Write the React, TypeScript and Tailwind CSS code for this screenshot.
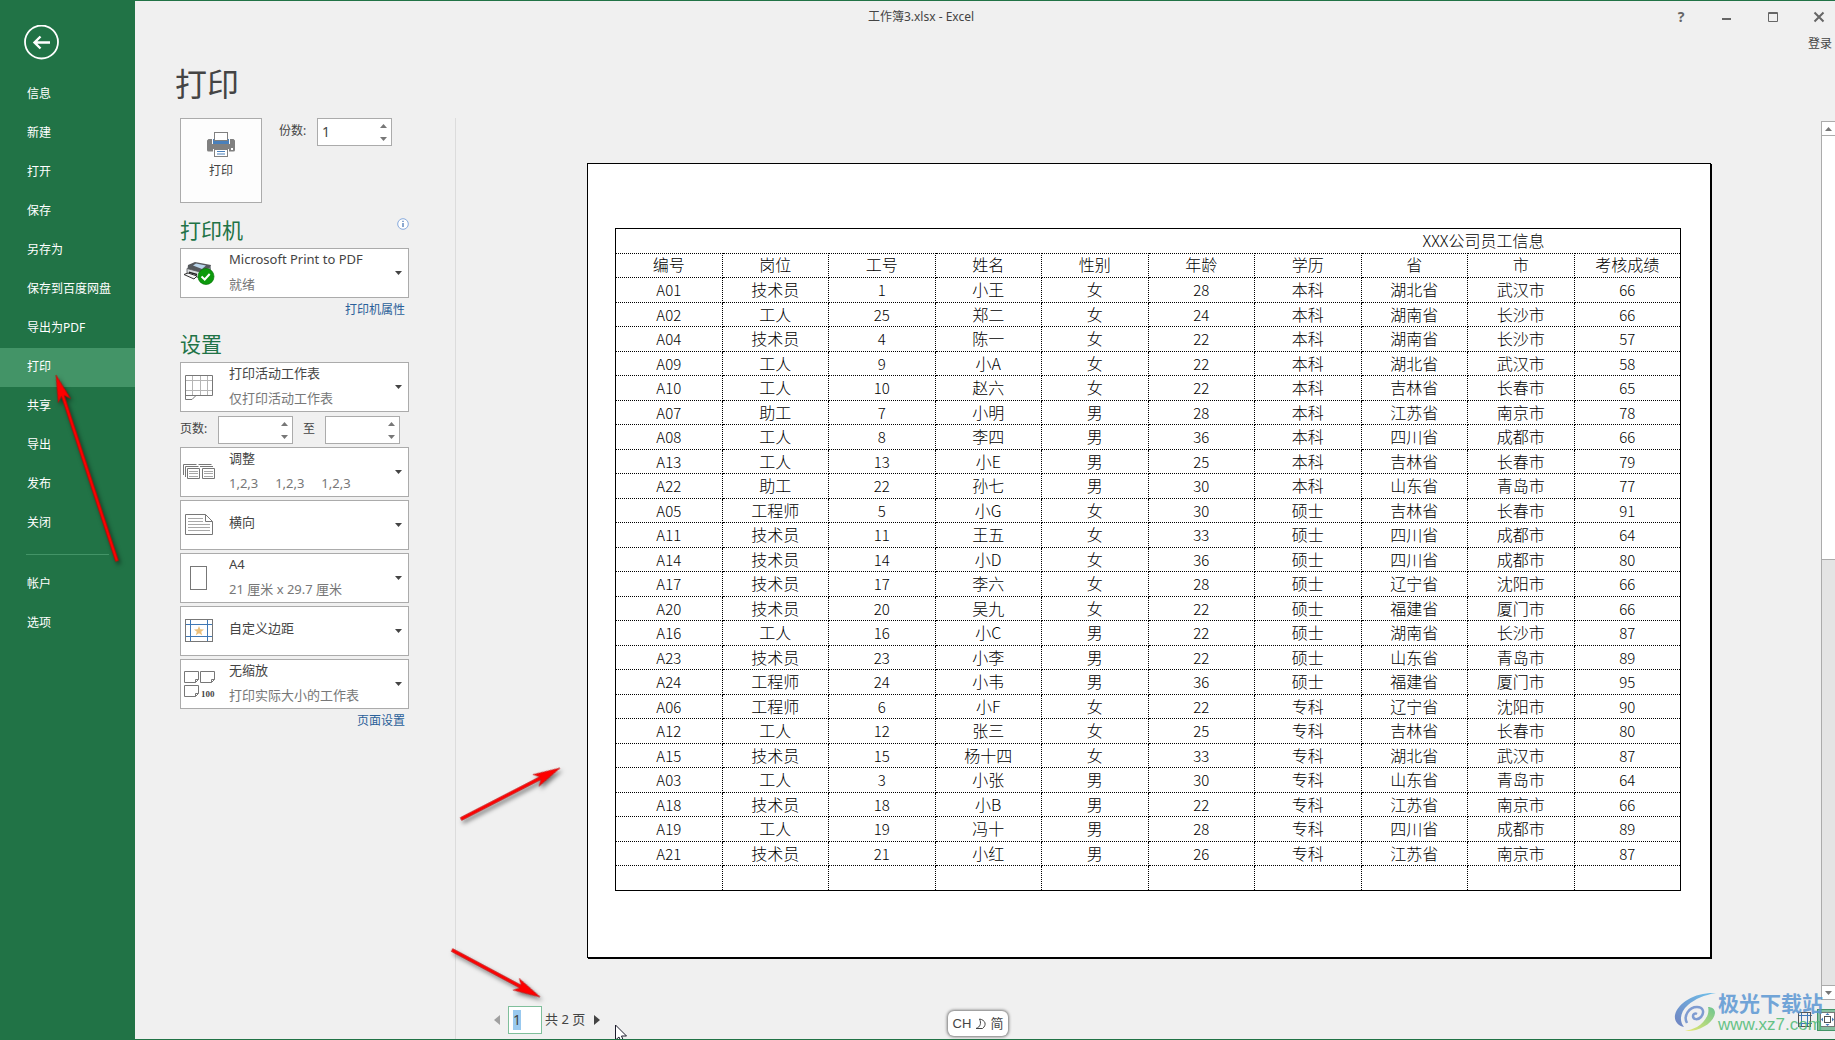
import React from "react";

const menuItems = ["信息", "新建", "打开", "保存", "另存为", "保存到百度网盘", "导出为PDF", "打印", "共享", "导出", "发布", "关闭"];

const headers = ["编号", "岗位", "工号", "姓名", "性别", "年龄", "学历", "省", "市", "考核成绩"];

const rows = [
  ["A01", "技术员", "1", "小王", "女", "28", "本科", "湖北省", "武汉市", "66"],
  ["A02", "工人", "25", "郑二", "女", "24", "本科", "湖南省", "长沙市", "66"],
  ["A04", "技术员", "4", "陈一", "女", "22", "本科", "湖南省", "长沙市", "57"],
  ["A09", "工人", "9", "小A", "女", "22", "本科", "湖北省", "武汉市", "58"],
  ["A10", "工人", "10", "赵六", "女", "22", "本科", "吉林省", "长春市", "65"],
  ["A07", "助工", "7", "小明", "男", "28", "本科", "江苏省", "南京市", "78"],
  ["A08", "工人", "8", "李四", "男", "36", "本科", "四川省", "成都市", "66"],
  ["A13", "工人", "13", "小E", "男", "25", "本科", "吉林省", "长春市", "79"],
  ["A22", "助工", "22", "孙七", "男", "30", "本科", "山东省", "青岛市", "77"],
  ["A05", "工程师", "5", "小G", "女", "30", "硕士", "吉林省", "长春市", "91"],
  ["A11", "技术员", "11", "王五", "女", "33", "硕士", "四川省", "成都市", "64"],
  ["A14", "技术员", "14", "小D", "女", "36", "硕士", "四川省", "成都市", "80"],
  ["A17", "技术员", "17", "李六", "女", "28", "硕士", "辽宁省", "沈阳市", "66"],
  ["A20", "技术员", "20", "吴九", "女", "22", "硕士", "福建省", "厦门市", "66"],
  ["A16", "工人", "16", "小C", "男", "22", "硕士", "湖南省", "长沙市", "87"],
  ["A23", "技术员", "23", "小李", "男", "22", "硕士", "山东省", "青岛市", "89"],
  ["A24", "工程师", "24", "小韦", "男", "36", "硕士", "福建省", "厦门市", "95"],
  ["A06", "工程师", "6", "小F", "女", "22", "专科", "辽宁省", "沈阳市", "90"],
  ["A12", "工人", "12", "张三", "女", "25", "专科", "吉林省", "长春市", "80"],
  ["A15", "技术员", "15", "杨十四", "女", "33", "专科", "湖北省", "武汉市", "87"],
  ["A03", "工人", "3", "小张", "男", "30", "专科", "山东省", "青岛市", "64"],
  ["A18", "技术员", "18", "小B", "男", "22", "专科", "江苏省", "南京市", "66"],
  ["A19", "工人", "19", "冯十", "男", "28", "专科", "四川省", "成都市", "89"],
  ["A21", "技术员", "21", "小红", "男", "26", "专科", "江苏省", "南京市", "87"],
  ["", "", "", "", "", "", "", "", "", ""],
];

function MenuItem({ label, active = false }: { label: string; active?: boolean }) {
  return (
    <li>
      <button
        className={`flex h-[39px] w-full items-center pb-[2px] pl-[27px] text-left text-xs text-white ${
          active ? "bg-[#439467]" : "hover:bg-[#2e7f53]"
        }`}
      >
        {label}
      </button>
    </li>
  );
}

function NumberBox({ label, value = "" }: { label: string; value?: string }) {
  return (
    <div className="flex h-7 w-[75px] border border-[#ababab] bg-white">
      <input
        type="text"
        aria-label={label}
        defaultValue={value}
        className="w-full min-w-0 flex-1 bg-transparent pl-1 text-sm text-[#444444] outline-none"
      />
      <div className="flex w-4 flex-col">
        <button aria-label={`${label} +`} className="flex flex-1 items-center justify-center">
          <svg width="7" height="4" viewBox="0 0 7 4">
            <path d="M3.5 0 7 4H0Z" fill="#777" />
          </svg>
        </button>
        <button aria-label={`${label} -`} className="flex flex-1 items-center justify-center">
          <svg width="7" height="4" viewBox="0 0 7 4">
            <path d="M0 0H7L3.5 4Z" fill="#777" />
          </svg>
        </button>
      </div>
    </div>
  );
}

function Picker({ name, title, note, icon }: { name: string; title: string; note?: string; icon: React.ReactNode }) {
  return (
    <div className="grid h-[50px] border border-[#ababab] bg-white text-[13px]">
      <select
        aria-label={name}
        className={`col-start-1 row-start-1 h-12 w-full appearance-none bg-transparent pl-12 pr-5 text-[#444444] outline-none ${
          note ? "pb-[26px]" : "pb-1"
        }`}
      >
        <option>{title}</option>
      </select>
      <div className="pointer-events-none col-start-1 row-start-1 flex h-12 items-center pr-[6px]">
        <span className="flex w-12 shrink-0 pl-[2px]">{icon}</span>
        <span className="flex-1 self-end whitespace-pre pb-[3px] leading-5 text-[#777777]">{note}</span>
        <svg width="7" height="4" viewBox="0 0 7 4">
          <path d="M0 0H7L3.5 4Z" fill="#444" />
        </svg>
      </div>
    </div>
  );
}

/* Icons */
function PrintIcon() {
  return (
    <svg width="28" height="25" viewBox="0 0 28 25">
      <path d="M1.500 7H5v5h18V7h3.500L28 8.500V18a1.500 1.500 0 0 1-1.500 1.500H22V17H6v2.500H1.500A1.500 1.500 0 0 1 0 18V8.500Z" fill="#808080" />
      <rect x="6" y="7" width="16" height="5" fill="#4a80bb" />
      <rect x="7.500" y=".5" width="13" height="8" fill="#fff" stroke="#808080" />
      <rect x="7.500" y="17.500" width="13" height="7" fill="#fff" stroke="#808080" />
      <path d="M10 19.500h8M10 22h8" stroke="#4a80bb" />
      <rect x="24" y="16" width="2" height="2" fill="#fff" />
    </svg>
  );
}

function PrinterReadyIcon() {
  return (
    <svg width="32" height="24" viewBox="0 0 32 24">
      <path d="M5 4 12 1l16 3-1 4-13 7-10-3Z" fill="#55585c" />
      <path d="M10 4.500 13 2.500l10 2-4 3.500Z" fill="#b9d4ea" />
      <path d="M4 7.500 17 11v6L4 13Z" fill="#d9dcdf" stroke="#55585c" strokeWidth=".8" />
      <path d="M17 11 28 6v7l-11 5Z" fill="#85898e" />
      <path d="M6 10.500 14 12.700v1.500L6 12Z" fill="#222" />
      <path d="M1 13.500 5 12l9 3-3 3Z" fill="#f4f4f4" stroke="#333" />
      <circle cx="23" cy="15.500" r="8" fill="#0c9a0c" stroke="#087608" strokeWidth=".7" />
      <path d="m18.500 15.500 3.200 3 5-5.500" fill="none" stroke="#fff" strokeWidth="2" />
    </svg>
  );
}

function SheetIcon() {
  return (
    <svg width="32" height="26" viewBox="0 0 32 26">
      <path d="M2 6.500h27M2 16.500h27M9.500 1v20M17.500 1v20M24.500 1v20" stroke="#b5b5b5" fill="none" />
      <path d="M2.500 1.500h27v20H13l-4 4H2.500Z M2.500 21.500H13" stroke="#777" fill="none" />
    </svg>
  );
}

function CollateIcon() {
  return (
    <svg width="33" height="16" viewBox="0 0 33 16">
      <path d="M.5 11V.5h13M2.500 13V2.500h13M15.500.5h13M17 2.500h13" stroke="#777" fill="none" />
      <path d="M4.500 4.500h12v10h-12ZM19.500 4.500h12v10h-12Z" fill="#fff" stroke="#777" />
      <path d="M6 7.500h9M6 9.500h9M6 12.500h9M21 7.500h9M21 9.500h9M21 12.500h9" stroke="#a8a8a8" />
    </svg>
  );
}

function LandscapeIcon() {
  return (
    <svg width="32" height="22" viewBox="0 0 32 22">
      <path d="M2.500.5h20l7 7v13h-27ZM22.500.5v7h7" stroke="#777" fill="none" />
      <path d="M5 4.500h15M5 7.500h15M5 10.500h22M5 13.500h22M5 16.500h22" stroke="#a8a8a8" />
    </svg>
  );
}

function PaperIcon() {
  return (
    <svg width="32" height="24" viewBox="0 0 32 24">
      <rect x="7.500" y=".5" width="16" height="23" stroke="#777" fill="none" />
    </svg>
  );
}

function MarginsIcon() {
  return (
    <svg width="32" height="24" viewBox="0 0 32 24">
      <path d="M2 5.500h27M2 17.500h27M7.500 1v22M24.500 1v22" stroke="#3f78b5" />
      <rect x="2.500" y=".5" width="27" height="22" stroke="#777" fill="none" />
      <path d="m16 7 1.300 3.200 3.700.2-2.800 2.300 1 3.500L16 14.200l-3.200 2 1-3.500L11 10.400l3.700-.2Z" fill="#ecc07b" />
    </svg>
  );
}

function ScaleIcon() {
  return (
    <svg width="32" height="27" viewBox="0 0 32 27">
      <g stroke="#777" fill="none">
        <path d="M1.500.5h14v8l-3 3h-11ZM12.500 11.500v-3h3" />
        <path d="M17.500.5h14v8l-3 3h-11ZM28.500 11.500v-3h3" />
        <path d="M1.500 14.500h14v8l-3 3h-11ZM12.500 25.500v-3h3" />
      </g>
      <text x="18" y="26" fontFamily="Liberation Serif, serif" fontSize="9" fontWeight="bold" fill="#444">
        100
      </text>
    </svg>
  );
}

function RedArrow({ x1, y1, x2, y2 }: { x1: number; y1: number; x2: number; y2: number }) {
  const length = Math.hypot(x2 - x1, y2 - y1);
  const angle = (Math.atan2(y2 - y1, x2 - x1) * 180) / Math.PI;
  return (
    <g transform={`translate(${x2} ${y2}) rotate(${angle})`} fill="#fe0000">
      <path d={`M${-length} -1.500 L-22 -1.500 L-27 -6.500 L0 0 L-27 6.500 L-22 1.500 L${-length} 1.500 Z`} stroke="#b40000" strokeWidth=".5" />
    </g>
  );
}

export default function App() {
  return (
    <div className="relative flex min-h-screen overflow-hidden border-y border-[#217346] bg-[#f0f0f0] font-['Noto_Sans','Noto_Sans_CJK_SC',sans-serif] text-[#444444]">
      {/* Sidebar */}
      <nav className="w-[135px] shrink-0 bg-[#217346] pt-6">
        <button aria-label="返回" className="ml-6 block h-[35px] w-[35px]">
          <svg width="35" height="35" viewBox="0 0 35 35" fill="none" stroke="#fff">
            <circle cx="17.500" cy="17" r="16.500" strokeWidth="1.800" />
            <path d="M26 17.500H11M16.500 11.500l-6 6 6 6" strokeWidth="2.400" />
          </svg>
        </button>
        <ul className="mt-[15px]">
          {menuItems.map((item) => (
            <MenuItem key={item} label={item} active={item === "打印"} />
          ))}
        </ul>
        <hr className="mx-[26px] mt-[11px] mb-[10px] border-[#439467]" />
        <ul>
          <MenuItem label="帐户" />
          <MenuItem label="选项" />
        </ul>
      </nav>

      <div className="flex min-w-0 flex-1 flex-col">
        {/* Title bar */}
        <header className="flex h-8 items-center">
          <p className="flex-1 pl-[34px] text-center text-xs">工作簿3.xlsx - Excel</p>
          <div className="flex items-center gap-[30px] pr-2">
            <button aria-label="帮助" className="h-4 w-4 text-sm leading-4 font-bold text-[#666666]">
              ?
            </button>
            <button aria-label="最小化" className="h-4 w-4">
              <svg width="16" height="16" viewBox="0 0 16 16">
                <path d="M3 10h9" stroke="#666" strokeWidth="2" />
              </svg>
            </button>
            <button aria-label="最大化" className="h-4 w-4">
              <svg width="16" height="16" viewBox="0 0 16 16">
                <path d="M3.500 3.500h9v9h-9ZM3 4.500h10" fill="none" stroke="#666" />
              </svg>
            </button>
            <button aria-label="关闭窗口" className="h-4 w-4">
              <svg width="16" height="16" viewBox="0 0 16 16">
                <path d="m3.500 3.500 9 9m0-9-9 9" stroke="#666" strokeWidth="2" />
              </svg>
            </button>
          </div>
        </header>
        <div className="flex justify-end pr-[3px]">
          <a href="#" className="text-xs leading-[22px]">
            登录
          </a>
        </div>
        <h1 className="mb-[6px] pl-10 text-[32px] leading-[57px]">打印</h1>

        <div className="flex flex-1">
          {/* Print settings */}
          <section className="w-[321px] shrink-0 border-r border-[#dcdcdc] pl-[45px]">
            <div className="w-[229px]">
              <div className="flex items-start">
                <button className="flex h-[85px] w-[82px] flex-col items-center border border-[#ababab] bg-[#fdfdfd] pt-[13px] text-xs">
                  <PrintIcon />
                  <span className="mt-1 leading-5">打印</span>
                </button>
                <span className="ml-[17px] w-[38px] text-xs leading-[26px]">份数:</span>
                <NumberBox label="份数" value="1" />
              </div>

              <div className="mt-[11px] flex h-[34px] justify-between">
                <h2 className="text-[21px] leading-8 text-[#217346]">打印机</h2>
                <svg className="mt-1" width="12" height="12" viewBox="0 0 12 12">
                  <circle cx="6" cy="6" r="5.300" fill="#fff" stroke="#86a9dc" />
                  <path d="M6 5v4M6 2.800v1.300" stroke="#3f6fb0" strokeWidth="1.200" />
                </svg>
              </div>
              <Picker name="打印机" title="Microsoft Print to PDF" note="就绪" icon={<PrinterReadyIcon />} />
              <p className="pr-1 text-right text-xs leading-6">
                <a href="#" className="text-[#2a6099]">
                  打印机属性
                </a>
              </p>

              <h2 className="mt-[6px] mb-[2px] text-[21px] leading-8 text-[#217346]">设置</h2>
              <Picker name="打印范围" title="打印活动工作表" note="仅打印活动工作表" icon={<SheetIcon />} />
              <div className="mt-1 mb-[3px] flex">
                <span className="w-[38px] text-xs leading-[26px]">页数:</span>
                <NumberBox label="起始页" />
                <span className="w-8 text-center text-xs leading-[26px]">至</span>
                <NumberBox label="结束页" />
              </div>
              <div className="flex flex-col gap-[3px]">
                <Picker name="调整" title="调整" note="1,2,3     1,2,3     1,2,3" icon={<CollateIcon />} />
                <Picker name="方向" title="横向" icon={<LandscapeIcon />} />
                <Picker name="纸张" title="A4" note="21 厘米 x 29.7 厘米" icon={<PaperIcon />} />
                <Picker name="边距" title="自定义边距" icon={<MarginsIcon />} />
                <Picker name="缩放" title="无缩放" note="打印实际大小的工作表" icon={<ScaleIcon />} />
              </div>
              <p className="pr-1 text-right text-xs leading-6">
                <a href="#" className="text-[#2a6099]">
                  页面设置
                </a>
              </p>
            </div>
          </section>

          {/* Preview */}
          <section className="flex min-w-0 flex-1 flex-col">
            <div className="flex flex-1">
              <div className="min-w-0 flex-1 pt-[45px] pr-[110px] pb-10 pl-[131px]">
                <div className="border border-black bg-white pt-16 pr-[29px] pb-[66px] pl-[27px] shadow-[1px_1px_0_#000]">
                  <table className="w-full table-fixed border-collapse border border-black font-['Noto_Sans_CJK_SC',sans-serif] text-base leading-5 font-light text-black">
                    <tbody>
                      <tr className="h-[25px]">
                        <td colSpan={10} className="p-0 pb-[3px] pl-[63%] text-center">
                          XXX公司员工信息
                        </td>
                      </tr>
                      <tr className="h-6">
                        {headers.map((header) => (
                          <th key={header} className="border border-dotted border-black p-0 pb-[3px] font-light">
                            {header}
                          </th>
                        ))}
                      </tr>
                      {rows.map((row, i) => (
                        <tr key={i} className="h-6 odd:h-[25px]">
                          {row.map((cell, j) => (
                            <td
                              key={j}
                              className={`border border-dotted border-black p-0 text-center ${
                                /^[A-Z0-9]+$/.test(cell) ? "text-[15px]" : "pb-[2px]"
                              }`}
                            >
                              {cell}
                            </td>
                          ))}
                        </tr>
                      ))}
                    </tbody>
                  </table>
                </div>
              </div>

              {/* Scrollbar */}
              <div className="mt-[3px] flex w-[14px] flex-col border-l border-[#ababab] bg-[#e4e4e4]">
                <button aria-label="向上滚动" className="flex h-[15px] items-center justify-center border-y border-[#ababab] bg-white">
                  <svg width="7" height="4" viewBox="0 0 7 4">
                    <path d="M3.500 0 7 4H0Z" fill="#777" />
                  </svg>
                </button>
                <div className="h-[424px] border-b border-[#ababab] bg-white" />
                <button aria-label="向下滚动" className="mt-auto flex h-[15px] items-center justify-center border-y border-[#ababab] bg-white">
                  <svg width="7" height="4" viewBox="0 0 7 4">
                    <path d="M0 0H7L3.500 4Z" fill="#777" />
                  </svg>
                </button>
              </div>
            </div>

            {/* Pager */}
            <footer className="flex h-[39px] items-center justify-between">
              <div className="flex items-center pl-[38px]">
                <button aria-label="上一页" className="h-7 w-[14px]">
                  <svg width="6" height="10" viewBox="0 0 6 10">
                    <path d="M6 0V10L0 5Z" fill="#a0a0a0" />
                  </svg>
                </button>
                <div className="flex h-7 w-[34px] items-center border border-[#7fbf9b] bg-white pl-1">
                  <input
                    type="text"
                    aria-label="当前页"
                    defaultValue="1"
                    className="h-5 w-2 bg-[#99c9ef] text-sm text-[#444444] outline-none"
                  />
                </div>
                <span className="ml-[3px] w-[49px] text-[13px]">共 2 页</span>
                <button aria-label="下一页" className="h-7 w-3">
                  <svg width="6" height="10" viewBox="0 0 6 10">
                    <path d="M0 0V10L6 5Z" fill="#444" />
                  </svg>
                </button>
              </div>
              <div className="flex items-center">
                <button aria-label="显示边距" className="flex h-[22px] w-[19px] items-center">
                  <svg width="14" height="15" viewBox="0 0 14 15" fill="none">
                    <path d="M3.500 0v15M9.500 0v15M0 3.500h14M0 11.500h14" stroke="#3f78b5" />
                    <rect x=".5" y=".5" width="12" height="14" stroke="#555" />
                  </svg>
                </button>
                <button aria-label="缩放到页面" className="flex h-[22px] w-[18px] items-center border border-r-0 border-[#439467] bg-[#86bfa0] pl-[2px]">
                  <svg width="15" height="15" viewBox="0 0 15 15">
                    <rect x=".5" y=".5" width="14" height="14" fill="#fff" stroke="#777" />
                    <rect x="4.500" y="4.500" width="6" height="6" fill="#fff" stroke="#555" />
                    <path d="m7.500 1 2 2h-4ZM7.500 14l2-2h-4ZM1 7.500l2-2v4ZM14 7.500l-2-2v4Z" fill="#3f78b5" />
                  </svg>
                </button>
              </div>
            </footer>
          </section>
        </div>
      </div>

      {/* Input method badge */}
      <div className="absolute bottom-[3px] left-[948px] flex h-[25px] w-[60px] items-center justify-center gap-1 rounded-md bg-white text-[13px] shadow-[0_0_3px_1px_#777]">
        <span className="font-['Liberation_Sans',sans-serif]">CH</span>
        <svg width="11" height="12" viewBox="0 0 11 12">
          <path d="M4.500 1c6 1 7.500 6 3 9.500H1C5.500 9 6.500 5 4.500 1Z" fill="none" stroke="#444" />
        </svg>
        <span>简</span>
      </div>

      {/* Site mark */}
      <div className="pointer-events-none absolute right-3 bottom-[6px] flex items-center gap-[2px]">
        <svg width="42" height="40" viewBox="0 0 42 40">
          <defs>
            <linearGradient id="swirlBlue" x1="0" y1="1" x2="1" y2="0">
              <stop offset="0" stopColor="#5a6fb8" />
              <stop offset="1" stopColor="#58b9ea" />
            </linearGradient>
            <linearGradient id="swirlGreen" x1="0" y1="1" x2="1" y2="0">
              <stop offset="0" stopColor="#e9e85a" />
              <stop offset="1" stopColor="#56bd80" />
            </linearGradient>
          </defs>
          <path d="M42 1C22 0 4 10 1 23c-1 6 3 11 9 12C5 29 6 20 14 13 21 7 30 3 42 1Z" fill="url(#swirlBlue)" opacity=".85" />
          <path d="M11 39c14 1 29-8 30-18 0-4-3-6-7-6 2 7-3 15-11 20-4 2-8 3-12 4Z" fill="url(#swirlGreen)" opacity=".85" />
          <path d="M13 31C9 24 15 15 23 15c6 0 8 5 4 10-3 3-8 3-8-1 0-2 2-3 4-2" fill="none" stroke="#6b8dcb" strokeWidth="2.500" opacity=".85" />
        </svg>
        <div className="flex flex-col gap-1">
          <span className="font-['Noto_Sans_CJK_SC',sans-serif] text-[21px] leading-[22px] font-bold text-[#5b97d3] opacity-85">极光下载站</span>
          <span className="font-['Liberation_Sans',sans-serif] text-[17px] leading-4 text-[#4fbb74] opacity-85">www.xz7.com</span>
        </div>
      </div>

      {/* Pointer arrows and cursor */}
      <svg className="pointer-events-none absolute inset-0 h-full w-full">
        <g className="drop-shadow-[2px_3px_2px_rgba(0,0,0,0.5)]">
          <RedArrow x1={117} y1={560} x2={56} y2={374} />
          <RedArrow x1={461} y1={818} x2={560} y2={767} />
          <RedArrow x1={452} y1={949} x2={540} y2={996} />
        </g>
        <path d="M615.500 1024v15l3.500-3 2.500 6 2.500-1-2.500-6h5Z" fill="#fff" stroke="#1c1c2c" />
      </svg>
    </div>
  );
}
